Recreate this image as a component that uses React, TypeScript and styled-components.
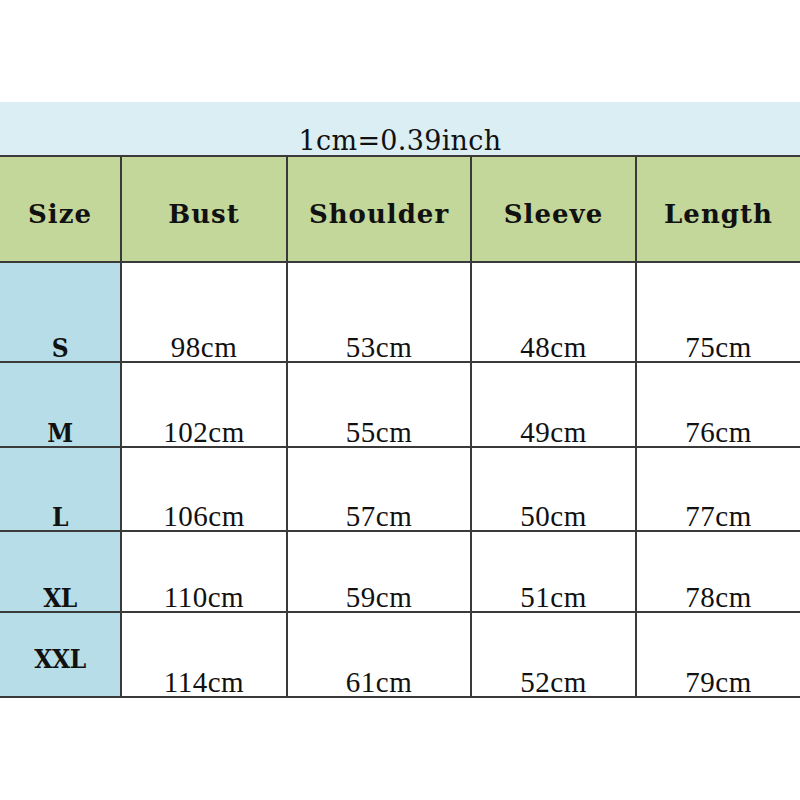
import React from "react";
import styled, { createGlobalStyle } from "styled-components";

const Global = createGlobalStyle`
  html, body { margin: 0; padding: 0; background: #ffffff; }
  body { width: 800px; height: 800px; overflow: hidden; }
`;

const Page = styled.div`
  padding-top: 102px;
  width: 800px;
`;

const Banner = styled.div`
  height: 52px;
  background: #daeef3;
  border-bottom: 2px solid #3a3a3a;
  display: flex;
  align-items: flex-end;
  justify-content: center;
  padding-bottom: 1px;
  box-sizing: content-box;
  font-family: "DejaVu Serif", serif;
  font-size: 27px;
  line-height: 1;
  color: #111;
  letter-spacing: 0.3px;
`;

const Grid = styled.div`
  display: grid;
  grid-template-columns: 122px 166px 184px 165px 1fr;
`;

const HeadCell = styled.div<{ $last?: boolean }>`
  height: 94px;
  background: #c4d79b;
  border-right: ${(p) => (p.$last ? "none" : "2px solid #3a3a3a")};
  border-bottom: 2px solid #3a3a3a;
  display: flex;
  align-items: center;
  justify-content: center;
  padding-top: 10px;
  box-sizing: content-box;
  font-family: "DejaVu Serif", serif;
  font-weight: bold;
  font-size: 26px;
  letter-spacing: 1px;
  color: #111;
`;

const SizeCell = styled.div<{ $h: number; $center?: boolean }>`
  height: ${(p) => p.$h}px;
  background: #b7dee8;
  border-right: 2px solid #3a3a3a;
  border-bottom: 2px solid #3a3a3a;
  display: flex;
  align-items: ${(p) => (p.$center ? "center" : "flex-end")};
  justify-content: center;
  padding-bottom: ${(p) => (p.$center ? "0" : "3px")};
  padding-top: ${(p) => (p.$center ? "8px" : "0")};
  box-sizing: border-box;
  font-family: "DejaVu Serif Condensed", "DejaVu Serif", serif;
  font-weight: bold;
  font-size: 26px;
  letter-spacing: -0.5px;
  line-height: 20px;
  color: #111;
`;

const DataCell = styled.div<{ $h: number; $last?: boolean }>`
  height: ${(p) => p.$h}px;
  background: #ffffff;
  border-right: ${(p) => (p.$last ? "none" : "2px solid #3a3a3a")};
  border-bottom: 2px solid #3a3a3a;
  display: flex;
  align-items: flex-end;
  justify-content: center;
  padding-bottom: 4px;
  box-sizing: border-box;
  font-family: "Liberation Serif", serif;
  font-size: 29px;
  letter-spacing: 0.5px;
  line-height: 20px;
  color: #111;
`;

const headers = ["Size", "Bust", "Shoulder", "Sleeve", "Length"];

const rows: { size: string; h: number; vals: string[]; center?: boolean }[] = [
  { size: "S", h: 100, vals: ["98cm", "53cm", "48cm", "75cm"] },
  { size: "M", h: 85, vals: ["102cm", "55cm", "49cm", "76cm"] },
  { size: "L", h: 84, vals: ["106cm", "57cm", "50cm", "77cm"] },
  { size: "XL", h: 81, vals: ["110cm", "59cm", "51cm", "78cm"] },
  { size: "XXL", h: 85, vals: ["114cm", "61cm", "52cm", "79cm"], center: true },
];

export default function App() {
  return (
    <>
      <Global />
      <Page>
        <Banner>1cm=0.39inch</Banner>
        <Grid>
          {headers.map((h, i) => (
            <HeadCell key={h} $last={i === headers.length - 1}>
              {h}
            </HeadCell>
          ))}
          {rows.map((r) => (
            <React.Fragment key={r.size}>
              <SizeCell $h={r.h} $center={r.center}>
                {r.size}
              </SizeCell>
              {r.vals.map((v, i) => (
                <DataCell key={i} $h={r.h} $last={i === r.vals.length - 1}>
                  {v}
                </DataCell>
              ))}
            </React.Fragment>
          ))}
        </Grid>
      </Page>
    </>
  );
}
